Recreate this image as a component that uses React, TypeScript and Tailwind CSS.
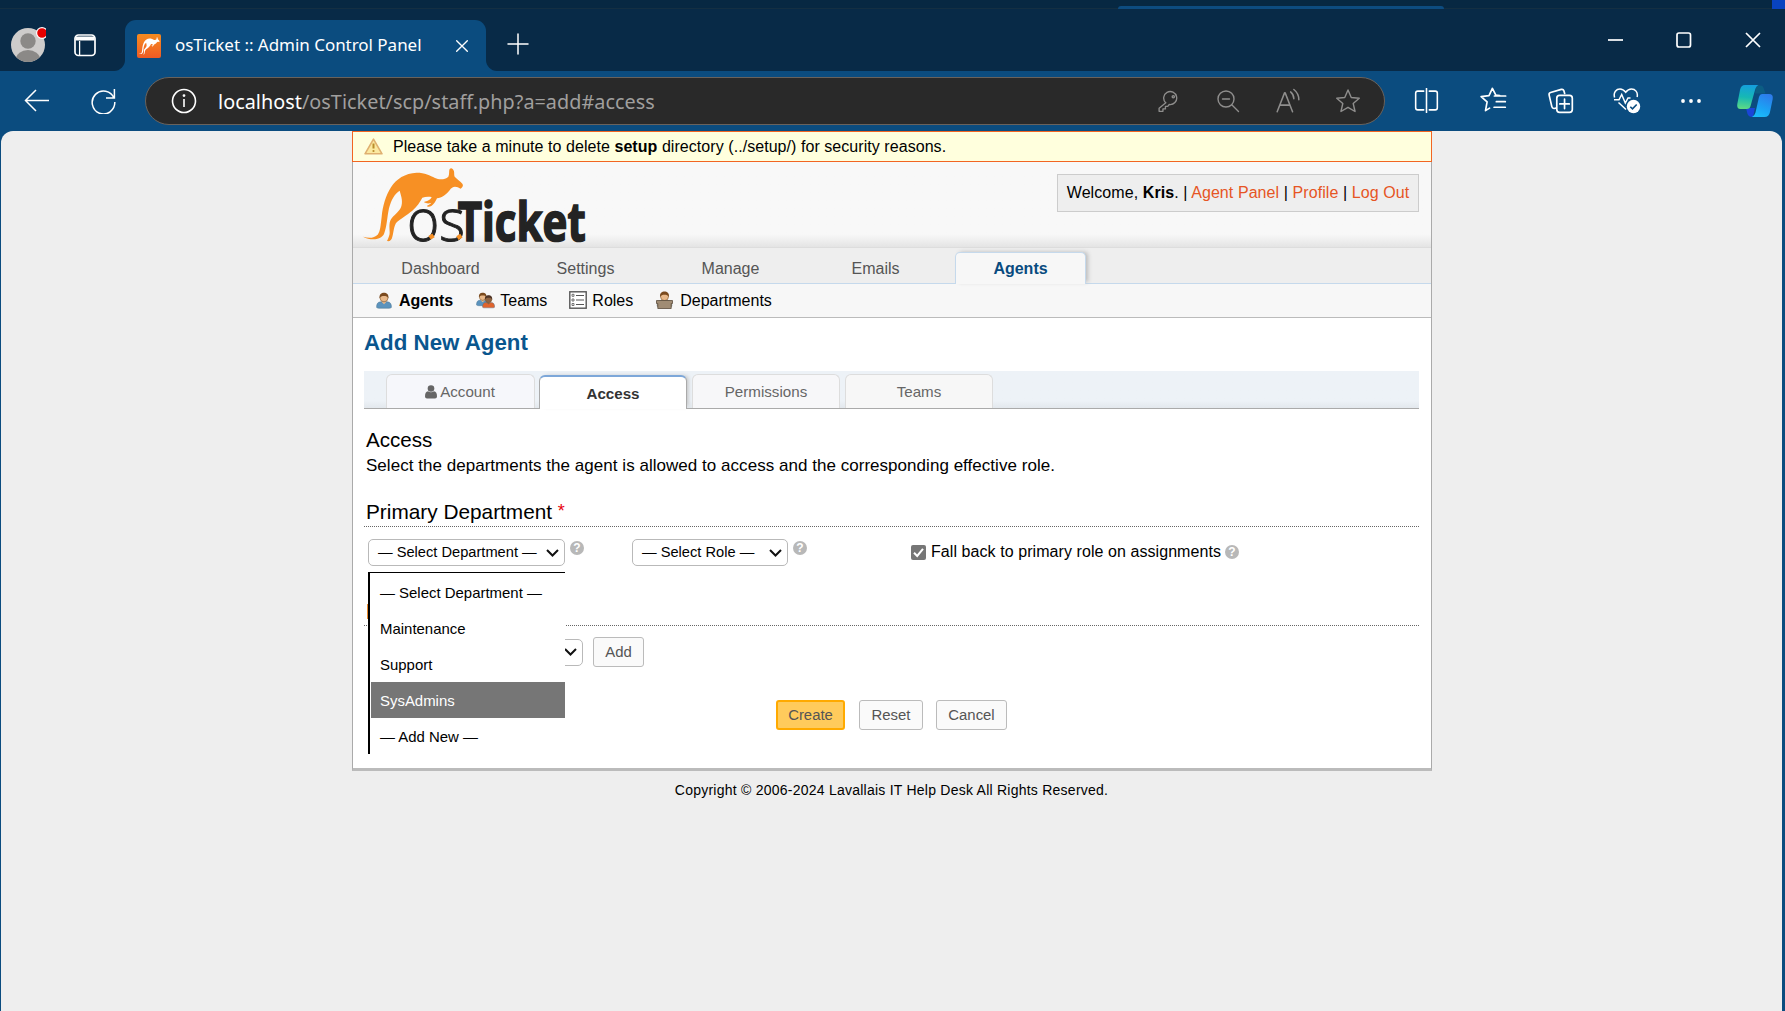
import type { ReactNode } from "react";

const KANGAROO =
  "M54 230 C72 236 88 234 98 224 C106 214 107 195 110 170 C114 135 122 108 138 82 C154 56 180 40 215 38 C240 38 255 46 270 54 C282 60 300 60 310 50 C314 44 311 32 314 27 C318 22 324 25 327 34 C328 40 327 46 329 50 C338 58 346 64 352 71 C356 76 353 81 347 86 C341 82 336 80 330 80 C324 80 318 84 314 91 C304 104 290 114 276 115 C272 124 266 134 259 138 C254 141 247 141 245 138 C251 135 256 132 259 128 C253 131 244 131 237 127 C238 124 243 124 248 122 C254 120 258 116 260 111 C250 110 240 110 232 113 C226 124 216 140 202 152 C186 165 165 178 156 186 C146 196 147 214 142 230 C140 240 134 245 126 243 C130 234 134 226 134 218 C134 204 131 190 138 178 C146 166 162 156 168 142 C174 126 170 112 164 92 C150 100 138 120 132 145 C126 172 126 200 117 222 C108 240 78 243 54 230 Z";

function Kangaroo({ className, fill, viewBox }: { className: string; fill: string; viewBox: string }) {
  return (
    <svg className={className} viewBox={viewBox} preserveAspectRatio="none">
      <path d={KANGAROO} fill={fill} />
    </svg>
  );
}

function Icon({ children, size = 24, w = 1.5, className = "" }: { children: ReactNode; size?: number; w?: number; className?: string }) {
  return (
    <svg width={size} height={size} viewBox="0 0 24 24" fill="none" stroke="currentColor" strokeWidth={w} strokeLinecap="round" strokeLinejoin="round" className={className}>
      {children}
    </svg>
  );
}

function Logo() {
  return (
    <svg width="250" height="90" viewBox="0 0 750 270" className="-ml-2 block overflow-visible">
      <path d={KANGAROO} fill="#f79024" />
      <text x="186" y="242" fontFamily="Open Sans" fontWeight="300" fontSize="174" textLength="174" lengthAdjust="spacingAndGlyphs" fill="#232323" stroke="#232323" strokeWidth="3">os</text>
      <text x="338" y="242" fontFamily="Open Sans" fontWeight="700" fontSize="161" textLength="384" lengthAdjust="spacingAndGlyphs" fill="#232323" stroke="#232323" strokeWidth="5">Ticket</text>
      <rect x="253" y="223" width="14" height="13" fill="#f79024" transform="rotate(-32 260 230)" />
      <rect x="336" y="224" width="14" height="13" fill="#f79024" transform="rotate(-32 343 230)" />
    </svg>
  );
}

function TitleBar() {
  return (
    <div className="relative flex h-[71px] items-start bg-[#082a47]">
      <div className="absolute left-0 top-0 h-[9px] w-full border-b border-[#142f42] bg-[#072842]" />
      <div className="absolute left-[1118px] top-[6px] h-[3px] w-[326px] rounded-t-sm bg-[#0d4c80]" />
      <div className="absolute right-0 top-0 h-[9px] w-[13px] bg-[#0843c0]" />
      <svg width="36" height="38" viewBox="0 0 36 38" className="ml-[10px] mt-[26px]">
        <defs>
          <clipPath id="avatar"><ellipse cx="18" cy="19" rx="17" ry="17" /></clipPath>
        </defs>
        <circle cx="18" cy="19" r="17" fill="#cecccb" />
        <circle cx="18" cy="15" r="7.7" fill="#8b8987" />
        <ellipse cx="18" cy="33" rx="12" ry="9" fill="#8b8987" clipPath="url(#avatar)" />
        <circle cx="32" cy="7" r="5.4" fill="#e60000" stroke="#fff" strokeWidth="1.2" />
      </svg>
      <svg width="22" height="23" viewBox="0 0 22 23" className="ml-7 mt-[34px] text-white" fill="none" stroke="currentColor" strokeWidth="1.7">
        <rect x="1" y="1" width="20" height="20.5" rx="3.5" />
        <path d="M1.5 2.5h19v4h-19z" fill="currentColor" stroke="none" />
        <path d="M5.6 7v14" strokeWidth="1.3" />
      </svg>
      <div className="relative ml-[29px] mt-5 flex h-[51px] w-[361px] items-center rounded-t-[11px] bg-[#0b4c7f] pb-[2px]">
        <svg width="11" height="11" viewBox="0 0 11 11" className="absolute -left-[11px] bottom-0"><path d="M11 0v11H0C6 11 11 6 11 0Z" fill="#0b4c7f" /></svg>
        <svg width="11" height="11" viewBox="0 0 11 11" className="absolute -right-[11px] bottom-0"><path d="M0 0v11h11C5 11 0 6 0 0Z" fill="#0b4c7f" /></svg>
        <div className="ml-3 mt-[3px] flex h-6 w-6 items-center justify-center rounded-[2px] bg-gradient-to-b from-[#f68b1f] to-[#ee5a24]">
          <Kangaroo className="h-[18px] w-[22px]" fill="#fff" viewBox="50 20 310 230" />
        </div>
        <span className="ml-[14px] whitespace-nowrap font-['Noto_Sans',sans-serif] text-[17px] leading-6 tracking-[-0.03px] text-white">osTicket :: Admin Control Panel</span>
        <Icon size={16} w={2} className="absolute left-[329px] top-[18px] text-white"><path d="M4 4l16 16M20 4L4 20" /></Icon>
      </div>
      <Icon size={24} w={1.5} className="ml-5 mt-[32px] text-white"><path d="M12 2v20M2 12h20" /></Icon>
      <svg width="154" height="16" viewBox="0 0 154 16" fill="none" stroke="#fff" strokeWidth="1.7" className="ml-auto mr-6 mt-[32px]">
        <path d="M1 8h15" />
        <rect x="70" y="1" width="13.5" height="14" rx="2" />
        <path d="M139 1l14 14M153 1l-14 14" />
      </svg>
    </div>
  );
}

function Cell({ children, className = "w-[60px]" }: { children: ReactNode; className?: string }) {
  return <div className={`flex shrink-0 items-center justify-center ${className}`}>{children}</div>;
}

const STAR = "M12 1.8l3 6.9 7.4.7-5.6 4.9 1.7 7.4L12 17.8l-6.5 3.9 1.7-7.4-5.6-4.9 7.4-.7Z";

function Toolbar() {
  return (
    <div className="flex h-[60px] items-center bg-[#0b4c7f] text-white">
      <Cell className="w-[70px] pl-1">
        <svg width="26" height="23" viewBox="0 0 26 23" fill="none" stroke="currentColor" strokeWidth="1.5" className="-mt-[2px]"><path d="M25 11.5H1.5M12 1L1.5 11.5 12 22" /></svg>
      </Cell>
      <Cell className="w-[64px] pl-[2px]">
        <svg width="25" height="26" viewBox="0 0 25 26" fill="none" stroke="currentColor" strokeWidth="1.5" className="-mt-px"><path d="M23 10.2A11.3 11.5 0 1 0 23.8 14M23.4 1v9H15" /></svg>
      </Cell>
      <div className="ml-[11px] flex h-12 w-[1240px] shrink-0 items-center rounded-full border border-[#69625c] bg-[#292929] pr-[6px]">
        <svg width="26" height="26" viewBox="0 0 26 26" fill="none" stroke="currentColor" strokeWidth="1.6" className="ml-[25px]">
          <circle cx="13" cy="13" r="11.5" /><path d="M13 11v8" /><circle cx="13" cy="7.6" r="0.6" fill="currentColor" />
        </svg>
        <span className="ml-[21px] mt-px flex-1 whitespace-nowrap font-['Noto_Sans',sans-serif] text-[19.8px] leading-7 tracking-[0.04px] text-[#a09f9e]"><span className="text-white">localhost</span>/osTicket/scp/staff.php?a=add#access</span>
        <div className="flex text-[#8f8e8d]">
          <Cell><Icon size={23} w={1.4}><path d="M9.2 13.4 2.2 19v3.3h4v-2.6h2.6v-2.6h2.4l1.6-2a6.8 6.8 0 1 0-3.6-1.7Z" /><circle cx="17" cy="7" r="1.2" /></Icon></Cell>
          <Cell><Icon size={24} w={1.4}><circle cx="10" cy="10" r="8" /><path d="M16 16l6.5 6.5M6.5 10h7" /></Icon></Cell>
          <Cell><Icon size={26} w={1.4} className="-mt-px"><path d="M2 22L8.8 4.5h.6L16.2 22M4.6 15.8h9M14.4 3.6a8.5 8.5 0 0 1 3 6.4M17.4 1.4a12 12 0 0 1 4.6 9.4" /></Icon></Cell>
          <Cell><Icon size={26} w={1.3}><path d={STAR} /></Icon></Cell>
        </div>
      </div>
      <div className="ml-2 flex shrink-0">
        <Cell className="w-[67px]"><Icon size={25} w={1.5} className="-mt-px"><path d="M9.3 3H3.6Q1.6 3 1.6 5v14q0 2 2 2h5.7M14.7 3h5.7q2 0 2 2v14q0 2-2 2h-5.7M12 .5v23" /></Icon></Cell>
        <Cell className="w-[67px]"><Icon size={27} w={1.5} className="-mt-px"><path d="M17.5 7.6l-3.4-.4L11 1.2 8 7.6l-7 .9 5.3 4.7L4.9 21l3.6-2.2M12.8 8h10M14.5 13h8M12.5 18h10" /></Icon></Cell>
        <Cell className="w-[66px]"><Icon size={27} w={1.5} className="-mt-px"><path d="M8 18.8l-1.6.3Q4.7 19.300 4.300 17.500L1.900 7.200Q1.500 5.400 3.200 4.900l9.500-2.800Q14.500 1.700 15 3.400l.7 2.300" /><rect x="8.700" y="7.400" width="13.800" height="15.200" rx="2.500" /><path d="M15.600 10.800v8.400M11.400 15h8.400" /></Icon></Cell>
        <Cell className="w-[66px] pl-[2px]">
          <svg width="28" height="26" viewBox="0 0 28 26" fill="none" stroke="#fff" strokeWidth="1.5">
            <path d="M1.6 9.500C0 4 3.500 1 7 1c3 0 4.500 1.700 5.700 3.300C14 2.500 15.700 1 18.500 1c3.500 0 6.800 3 5.600 8M1 11.800h5l2.700-5.300 3.600 8.500 2.700-5h2.500M5.500 14.500l7.500 7" />
            <circle cx="20.500" cy="18.500" r="6.700" fill="#fff" stroke="none" />
            <path d="M17.300 18.700l2.200 2.200 4.200-4.400" stroke="#0b4c7f" strokeWidth="1.600" />
          </svg>
        </Cell>
        <Cell className="w-[64px]">
          <svg width="22" height="6" viewBox="0 0 22 6" fill="#fff" className="-mt-px"><circle cx="3" cy="3" r="1.900" /><circle cx="11" cy="3" r="1.900" /><circle cx="19" cy="3" r="1.900" /></svg>
        </Cell>
        <Cell className="ml-2 w-12">
          <svg width="38" height="34" viewBox="0 0 38 34">
            <defs>
              <linearGradient id="cpA" x1="0.400" y1="0" x2="0.300" y2="1"><stop offset="0" stopColor="#159fdc" /><stop offset="0.500" stopColor="#16b8b4" /><stop offset="1" stopColor="#5edb84" /></linearGradient>
              <linearGradient id="cpB" x1="0.700" y1="0" x2="0.300" y2="1"><stop offset="0" stopColor="#2d7bea" /><stop offset="0.600" stopColor="#1ba2f5" /><stop offset="1" stopColor="#1bbcf9" /></linearGradient>
            </defs>
            <path d="M20 1.500h4.500q2.500 0 3.300 3l1.700 5H19Z" fill="#0c5d83" />
            <path d="M10 24h9l-2 9q-4 .5-5.500-3Z" fill="#1b45d8" />
            <path d="M9 1h13.500q-2.500 1-3.500 5l-4.300 15.500Q14 25 10.500 25H4.500Q.5 25 1.300 20L4 6Q5 1 9 1Z" fill="url(#cpA)" />
            <path d="M26 10h7q4.500 0 3.700 5l-2.700 13q-1 5-5.500 5H16q2.500-1 3.500-4.500L23 13q.8-3 3-3Z" fill="url(#cpB)" />
          </svg>
        </Cell>
      </div>
    </div>
  );
}

function Person({ shirt = "#5b93bd", hair = "#7a4a1e", face = "#e9b98a" }: { shirt?: string; hair?: string; face?: string }) {
  return (
    <g>
      <path d="M.6 15.200Q.4 9.800 4.500 9.600h7q4.100.2 3.900 5.600-1 .8-2.400.8H3Q1.600 16 .6 15.200Z" fill={shirt} stroke="#47708f" strokeWidth=".5" />
      <path d="M5.500 9.500h5L8 12Z" fill={face} />
      <circle cx="8" cy="5.600" r="4" fill={face} stroke="#7a5228" strokeWidth=".6" />
      <path d="M3.600 6.200C3 2 5.500.5 8 .5s5 1.500 4.400 5.700C11.500 4 10 3.800 8 3.800S4.500 4 3.600 6.200Z" fill={hair} />
    </g>
  );
}

function SubNav() {
  return (
    <div className="flex h-[34px] items-center border-b border-[#bbb] bg-[#f7f7f7] pl-[23px] text-[16px] leading-[34px] text-black">
      <svg width="16" height="17" viewBox="0 0 16 16.500" className="-mt-px"><Person /></svg>
      <span className="ml-[7px] font-bold">Agents</span>
      <svg width="19" height="17" viewBox="0 0 19 16.500" className="-mt-px ml-[23px]">
        <g transform="scale(.84)"><Person /></g>
        <g transform="translate(6 2.5) scale(.82)"><Person shirt="#e0642d" hair="#4e3426" face="#8f6443" /></g>
      </svg>
      <span className="ml-[5px]">Teams</span>
      <svg width="18" height="18" viewBox="0 0 18 18" fill="none" stroke="#555" className="-mt-px ml-[22px]">
        <rect x=".8" y=".8" width="16.400" height="16.400" fill="#fff" strokeWidth="1.400" />
        <path d="M7 4.500h8M7 9h8M7 13.500h8" /><path d="M3 3.300h2v2H3zM3 8h2v2H3zM3 12.500h2v2H3z" strokeWidth=".8" />
      </svg>
      <span className="ml-[5px]">Roles</span>
      <svg width="17" height="18" viewBox="0 0 17 18" className="-mt-[2px] ml-[23px]">
        <g transform="translate(.5 0)"><Person shirt="#c08a4c" /></g>
        <path d="M.5 9.500h16v3h-1.300v5H1.800v-5H.5Z" fill="#a08c74" stroke="#5b4c3c" strokeWidth=".8" />
      </svg>
      <span className="ml-[7px]">Departments</span>
    </div>
  );
}

function Help({ className = "" }: { className?: string }) {
  return <span className={`flex h-[14px] w-[14px] shrink-0 items-center justify-center rounded-full bg-[#b8b8b8] text-[12px] font-bold leading-[14px] text-white ${className}`}>?</span>;
}

function Chevron({ className = "" }: { className?: string }) {
  return <svg width="13" height="8" viewBox="0 0 13 8" fill="none" stroke="#111" strokeWidth="2" className={className}><path d="M1 1l5.500 5.500L12 1" /></svg>;
}

function Select({ label, className }: { label: string; className: string }) {
  return (
    <div className={`flex h-[27px] shrink-0 items-center justify-between rounded-[5px] border border-[#b9b9b9] bg-white pl-[9px] pr-[5px] text-[14.650px] text-black ${className}`}>
      <span className="whitespace-nowrap leading-[25px]">{label}</span>
      <Chevron />
    </div>
  );
}

const OPTIONS = ["— Select Department —", "Maintenance", "Support", "SysAdmins", "— Add New —"];

function DepartmentMenu() {
  return (
    <div className="h-[182px] w-[197px] border-l-2 border-t border-black bg-white pl-px pt-px">
      {OPTIONS.map((o) => (
        <div key={o} className={`h-9 pl-[9px] text-[14.950px] leading-[37px] ${o === "SysAdmins" ? "bg-[#767676] text-white" : "text-black"}`}>{o}</div>
      ))}
    </div>
  );
}

const BTN = "flex h-[30px] items-center justify-center rounded-[3px] border text-[14.900px] text-[#555]";

function Page() {
  return (
    <div className="mx-auto w-[1080px]">
      <div className="flex h-[31px] items-center border border-[#f26522] bg-[#ffffdd] pl-[11px] text-[16px] leading-7 text-black">
        <svg width="19" height="17" viewBox="0 0 19 17"><path d="M9.500 1.200L18 15.800H1Z" fill="#fbe9a0" stroke="#dfb070" strokeWidth="1.600" strokeLinejoin="round" /><path d="M9.500 5.500v5" stroke="#b98c2c" strokeWidth="2" /><circle cx="9.500" cy="13" r="1.100" fill="#b98c2c" /></svg>
        <span className="ml-[10px] whitespace-nowrap tracking-[0.056px]">Please take a minute to delete <b>setup</b> directory (../setup/) for security reasons.</span>
      </div>
      <div className="border-x border-b-[3px] border-[#aaa] border-b-[#bbb] bg-white">
        <div className="flex h-[86px] items-start justify-between border-b border-[#ddd] bg-gradient-to-b from-[#f8f8f8] from-85% to-[#e4e4e4] pr-3">
          <div className="-mt-[2px] h-[86px]"><Logo /></div>
          <div className="mt-3 flex h-[38px] w-[362px] items-center justify-center border border-[#ccc] bg-[#eee] text-[16px] text-black">
            <span className="whitespace-nowrap tracking-[0.08px]">Welcome, <b>Kris</b>. | <a className="text-[#e65524]">Agent Panel</a> | <a className="text-[#e65524]">Profile</a> | <a className="text-[#e65524]">Log Out</a></span>
          </div>
        </div>
        <div className="flex h-9 items-end gap-[14px] border-b border-[#c5d9ec] bg-[#eee] pl-[22px] text-[16px] leading-[28px] text-[#555]">
          {["Dashboard", "Settings", "Manage", "Emails"].map((t) => (
            <div key={t} className="w-[131px] text-center">{t}</div>
          ))}
          <div className="-mb-px h-8 w-[131px] rounded-t-[5px] border border-b-0 border-[#c5d9ec] bg-[#f7f7f7] text-center font-bold leading-[31px] text-[#084b80] shadow-[3px_-1px_4px_-1px_#bbb]">Agents</div>
        </div>
        <SubNav />
        <div className="h-[450px] pl-[11px] pr-3">
          <h2 className="pt-[11px] text-[22.300px] font-bold leading-7 text-[#0a568e]">Add New Agent</h2>
          <div className="mt-[14px] flex h-[38px] items-end border-b border-[#aaa] bg-gradient-to-b from-[#edf2f7] from-80% to-[#e3e8ed] pl-[22px] text-[15.150px] text-[#666]">
            <div className="flex h-[34px] w-[149px] items-center justify-center rounded-t-[6px] border border-b-0 border-[#ddd] bg-[#f6f7fb] pr-px pt-px">
              <svg width="12" height="14" viewBox="0 0 12 14" fill="#666" className="mr-[3px]"><circle cx="6" cy="3.500" r="3.300" /><path d="M0 11.500Q0 6.500 3 6.300q3 2 6 0 3 .2 3 5.200 0 2-2 2H2q-2 0-2-2Z" /></svg>
              Account
            </div>
            <div className="-mb-px ml-1 flex h-[34px] w-[148px] items-center justify-center rounded-t-[6px] border border-b-0 border-t-2 border-[#aaa] border-t-[#7da7d9] bg-white pt-[2px] font-bold text-[#333] shadow-[3px_-1px_4px_-2px_#bbb]">Access</div>
            <div className="ml-[5px] flex h-[34px] w-[148px] items-center justify-center rounded-t-[6px] border border-b-0 border-[#ddd] bg-[#f7f7f9] pt-px">Permissions</div>
            <div className="ml-[5px] flex h-[34px] w-[148px] items-center justify-center rounded-t-[6px] border border-b-0 border-[#ddd] bg-[#f7f7f7] pt-px">Teams</div>
          </div>
          <div className="pl-[2px] pt-[18px] text-black">
            <div className="text-[20.600px] leading-[26px]">Access</div>
            <div className="whitespace-nowrap text-[17px] leading-[26px] tracking-[0.035px]">Select the departments the agent is allowed to access and the corresponding effective role.</div>
            <div className="mt-[20px] h-[27px] text-[20.800px] leading-[26px]">Primary Department <span className="relative -top-[2px] text-[18px] leading-none text-red-600">*</span></div>
          </div>
          <div className="relative border-t border-dotted border-[#666]">
            <div className="relative ml-1 flex h-[98px] items-start pt-3">
              <Select label="— Select Department —" className="w-[197px]" />
              <Help className="ml-[5px] mt-[2px]" />
              <Select label="— Select Role —" className="ml-[48px] w-[156px]" />
              <Help className="ml-[5px] mt-[2px]" />
              <div className="ml-[104px] mt-[6px] flex h-[15px] items-center text-[16px] text-black">
                <svg width="15" height="15" viewBox="0 0 15 15"><rect width="15" height="15" rx="2" fill="#767676" /><path d="M3 7.800l3.200 3.200L12 3.800" fill="none" stroke="#fff" strokeWidth="2" /></svg>
                <span className="-mt-px ml-[5px] whitespace-nowrap tracking-[0.070px]">Fall back to primary role on assignments</span>
                <Help className="-mt-px ml-1" />
              </div>
              <div className="absolute -left-px top-[77px] h-[15px] w-px bg-[#e88a2c]" />
            </div>
            <div className="absolute left-1 top-[45px] z-10"><DepartmentMenu /></div>
          </div>
          <div className="border-t border-dotted border-[#666] pt-[11px]">
            <div className="ml-1 flex items-center">
              <Select label="" className="w-[215px]" />
              <div className={`${BTN} ml-[10px] w-[51px] border-[#bbb] bg-[#fafafa]`}>Add</div>
            </div>
          </div>
          <div className="mt-[33px] flex pl-[412px]">
            <div className={`${BTN} w-[69px] border-2 border-[#ffaa00] bg-[#ffcb5c]`}>Create</div>
            <div className={`${BTN} ml-[14px] w-[64px] border-[#bbb] bg-[#fafafa]`}>Reset</div>
            <div className={`${BTN} ml-[13px] w-[71px] border-[#bbb] bg-[#fafafa]`}>Cancel</div>
          </div>
        </div>
      </div>
      <div className="mt-[9px] pr-px text-center text-[14px] leading-5 tracking-[0.240px] text-black">Copyright © 2006-2024 Lavallais IT Help Desk All Rights Reserved.</div>
    </div>
  );
}

export default function App() {
  return (
    <div className="flex h-[1011px] w-[1785px] flex-col overflow-hidden bg-[#0b4c7f] font-['Liberation_Sans',Arial,sans-serif]">
      <TitleBar />
      <Toolbar />
      <div className="ml-px mr-[3px] flex-1 rounded-t-[12px] bg-[#eeeeee]">
        <div className="pl-px"><Page /></div>
      </div>
    </div>
  );
}
